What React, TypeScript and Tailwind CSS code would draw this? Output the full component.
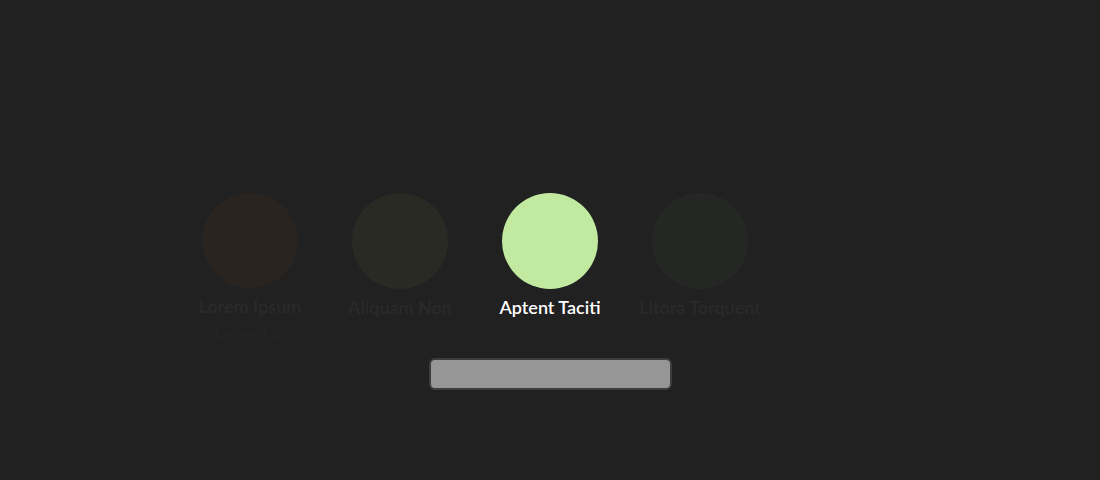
import React from "react";

interface Person {
  name: string;
  color: string;
  status?: string;
  active?: boolean;
}

const people: Person[] = [
  { name: "Lorem Ipsum", color: "bg-[#2a2420]", status: "logged in" },
  { name: "Aliquam Non", color: "bg-[#2a2a25]" },
  { name: "Aptent Taciti", color: "bg-[#c1eaa0]", active: true },
  { name: "Litora Torquent", color: "bg-[#252725]" },
];

export default function App() {
  return (
    <div
      className="flex h-[480px] w-[1100px] flex-col items-center bg-[#212121]"
      style={{ fontFamily: "Lato, 'Open Sans', sans-serif" }}
    >
      <div className="mt-[193px] flex w-full justify-center">
        <div className="flex h-[150px] pr-[150px]">
          {people.map((p) => (
            <div key={p.name} className="flex w-[150px] flex-col items-center">
              <div className={`h-24 w-24 rounded-full ${p.color}`} />
              <span
                className={`mt-[3px] whitespace-nowrap text-[18px] leading-[30px] font-semibold ${
                  p.active ? "text-white" : "text-[#2a2a2a]"
                }`}
              >
                {p.name}
              </span>
              {p.status && (
                <span className="mt-[2px] text-[18px] leading-[20px] text-[#252525]">{p.status}</span>
              )}
            </div>
          ))}
        </div>
      </div>
      <div className="mt-[15px] h-[32px] w-[243px] rounded-[6px] border-2 border-[#3d3d3d] bg-[#969696]" />
    </div>
  );
}
